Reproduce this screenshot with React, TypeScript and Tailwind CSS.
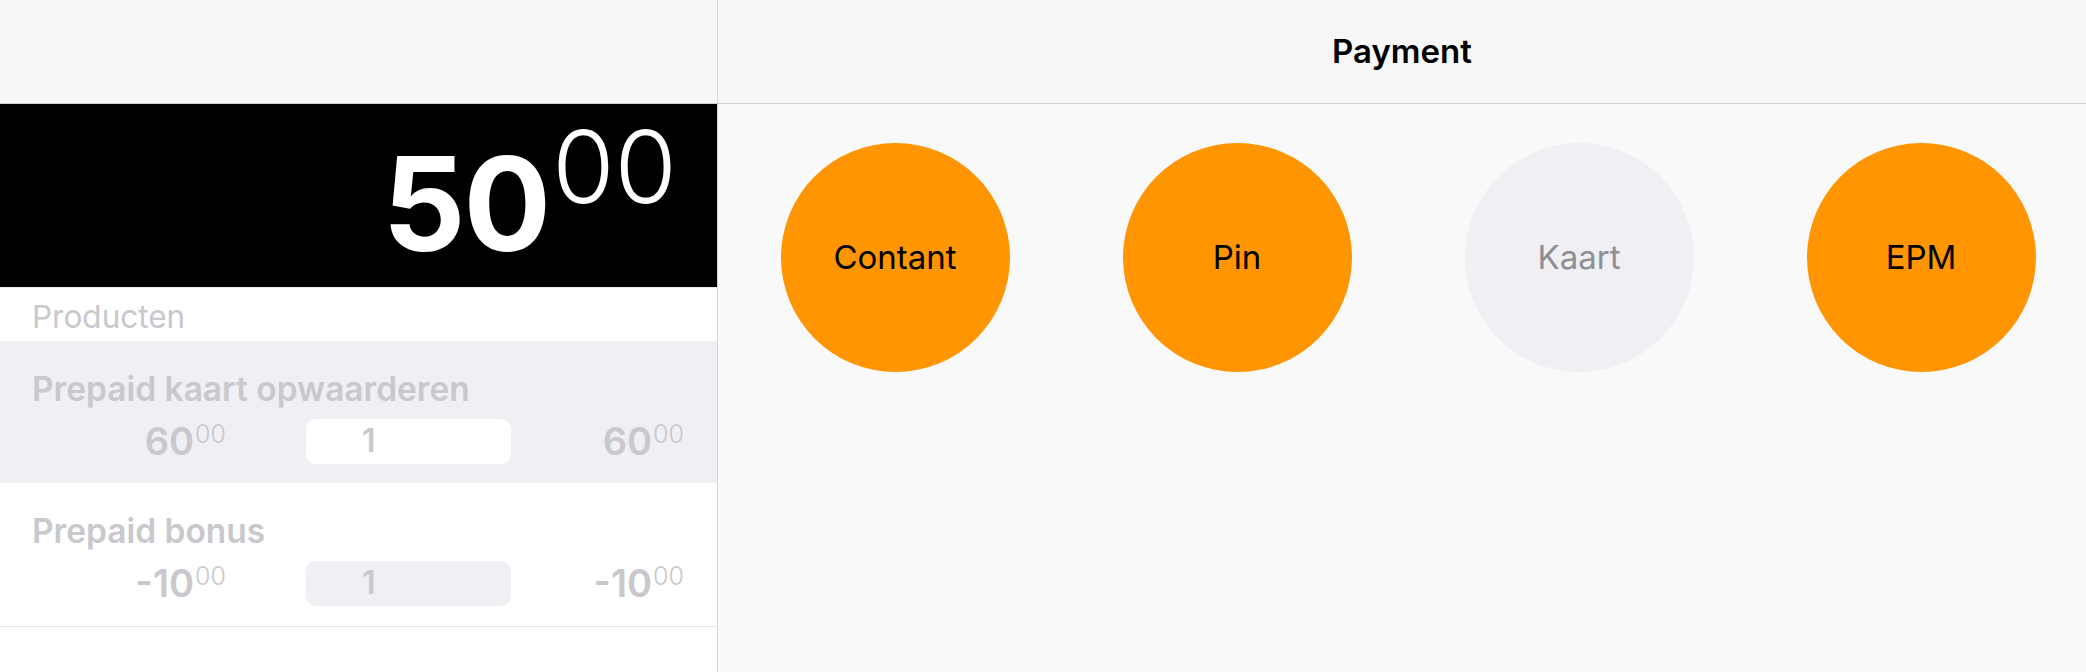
import React from 'react';

const font = { fontFamily: 'Inter, "Liberation Sans", sans-serif' };

type Line = { name: string; price: string; qty: string; total: string; highlight?: boolean };

const lines: Line[] = [
  { name: 'Prepaid kaart opwaarderen', price: '60', qty: '1', total: '60', highlight: true },
  { name: 'Prepaid bonus', price: '-10', qty: '1', total: '-10' },
];

const methods = [
  { label: 'Contant', enabled: true },
  { label: 'Pin', enabled: true },
  { label: 'Kaart', enabled: false },
  { label: 'EPM', enabled: true },
];

const Amount: React.FC<{ value: string }> = ({ value }) => (
  <div className="flex items-start text-[#c8c8cd]">
    <span className="text-[38px] leading-none font-semibold">{value}</span>
    <span className="text-[25px] leading-none font-light ml-[1px]">00</span>
  </div>
);

const ProductRow: React.FC<{ line: Line }> = ({ line }) => (
  <div
    className={`flex flex-col pt-[32px] ${line.highlight ? 'bg-[#efeff4] h-[142px]' : 'bg-white h-[144px] border-b border-[#e6e6ea]'}`}
  >
    <div className="pl-[32px] text-[33.5px] leading-none font-semibold text-[#c8c8cd]">
      {line.name}
    </div>
    <div className="flex items-center mt-[12px]">
      <div className="w-[226px] flex justify-end">
        <Amount value={line.price} />
      </div>
      <div
        className={`ml-[80px] w-[205px] h-[45px] rounded-[10px] flex items-center pl-[56px] text-[32px] font-semibold text-[#c8c8cd] ${line.highlight ? 'bg-white' : 'bg-[#efeff4]'}`}
      >
        {line.qty}
      </div>
      <div className="flex-1 flex justify-end pr-[33px]">
        <Amount value={line.total} />
      </div>
    </div>
  </div>
);

export default function App() {
  return (
    <div className="flex w-[2086px] h-[672px] overflow-hidden bg-white" style={font}>
      {/* left: order */}
      <div className="w-[718px] shrink-0 flex flex-col border-r border-[#d6d6d9] bg-white">
        <div className="h-[104px] bg-[#f7f7f7] border-b border-[#cfcfd2]" />
        <div className="h-[183px] bg-black flex items-start justify-end pr-[40px] text-white">
          <span className="text-[130px] leading-none font-bold mt-[35px] tracking-[-2px]">50</span>
          <span className="text-[101px] leading-none font-light mt-[12px] ml-[3px]">00</span>
        </div>
        <div className="h-[54px] pt-[13px] pl-[32px] text-[31.5px] leading-none text-[#c8c8cd] border-t border-[#ececef]">
          Producten
        </div>
        {lines.map((l, i) => (
          <ProductRow key={i} line={l} />
        ))}
      </div>

      {/* right: payment */}
      <div className="flex-1 flex flex-col bg-[#f9f9f9] overflow-hidden">
        <div className="h-[104px] shrink-0 bg-[#f7f7f7] border-b border-[#cfcfd2] flex items-center justify-center">
          <span className="text-[33px] font-semibold text-black">Payment</span>
        </div>
        <div className="flex pt-[39px] pl-[6px]">
          {methods.map((m) => (
            <div key={m.label} className="w-[342px] shrink-0 flex justify-center">
              <button
                className={`w-[229px] h-[229px] rounded-full flex items-center justify-center text-[33px] ${m.enabled ? 'bg-[#ff9500] text-black' : 'bg-[#efeff4] text-[#8e8e93]'}`}
              >
                {m.label}
              </button>
            </div>
          ))}
        </div>
      </div>
    </div>
  );
}
